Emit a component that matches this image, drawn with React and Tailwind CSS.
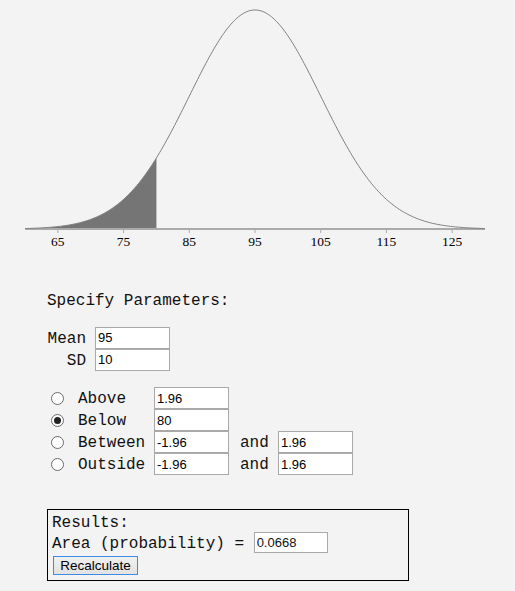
import React from "react";

const MEAN = 95;
const SD = 10;
const LO = 60;
const HI = 130;
const X0 = 25;
const X1 = 485;
const BASE = 229;
const PEAK = 219;

const sx = (v) => X0 + ((v - LO) * (X1 - X0)) / (HI - LO);
const sy = (v) => BASE - PEAK * Math.exp(-0.5 * ((v - MEAN) / SD) ** 2);

const curvePath = () => {
  const pts = [];
  for (let v = LO; v <= HI + 0.001; v += 0.25) {
    pts.push(`${sx(v).toFixed(2)},${sy(v).toFixed(2)}`);
  }
  return "M" + pts.join(" L");
};

const shadePath = (a, b) => {
  const pts = [`${sx(a).toFixed(2)},${BASE + 1}`];
  for (let v = a; v <= b + 0.001; v += 0.25) {
    pts.push(`${sx(v).toFixed(2)},${sy(v).toFixed(2)}`);
  }
  pts.push(`${sx(b).toFixed(2)},${BASE + 1}`);
  return "M" + pts.join(" L") + " Z";
};

const ticks = [65, 75, 85, 95, 105, 115, 125];

const Chart = () => (
  <svg width="515" height="260" className="block">
    <path d={shadePath(LO, 80)} fill="#757575" />
    <line x1={X0} y1={BASE} x2={X1} y2={BASE} stroke="#aaaaaa" strokeWidth="2" />
    {ticks.map((t) => (
      <g key={t}>
        <line x1={sx(t)} y1={BASE} x2={sx(t)} y2={BASE + 4} stroke="#aaaaaa" strokeWidth="1" />
        <text
          x={sx(t)}
          y={BASE + 17}
          textAnchor="middle"
          fontSize="13.5"
          fontFamily="'Liberation Serif', serif"
          fill="#000"
        >
          {t}
        </text>
      </g>
    ))}
    <path d={curvePath()} fill="none" stroke="#808080" strokeWidth="1" />
  </svg>
);

const Field = ({ value }) => (
  <input
    type="text"
    defaultValue={value}
    className="w-[75px] h-[22px] border border-[#a9a9a9] bg-white px-[2px] text-[13px] text-black font-['Liberation_Sans',Arial,sans-serif] outline-none"
  />
);

const Radio = ({ checked }) => (
  <span className="w-[13px] h-[13px] rounded-full border border-[#6b6b6b] bg-white flex items-center justify-center">
    {checked && <span className="w-[7px] h-[7px] rounded-full bg-[#222]" />}
  </span>
);

const options = [
  { label: "Above", a: "1.96" },
  { label: "Below", a: "80", checked: true },
  { label: "Between", a: "-1.96", b: "1.96" },
  { label: "Outside", a: "-1.96", b: "1.96" },
];

export default function App() {
  return (
    <div className="min-h-screen w-[515px] bg-[#f3f3f3] text-[#111] font-['Liberation_Mono','Courier_New',monospace] text-[16px]">
      <Chart />

      <div className="pl-[47px]">
        <div className="mt-[31px] h-[20px] leading-[20px]">Specify Parameters:</div>

        <div className="mt-[16px] flex flex-col">
          <div className="flex items-center h-[22px]">
            <span className="w-[39px] text-right pt-[3px] leading-[19px]">Mean</span>
            <span className="ml-[9px]">
              <Field value="95" />
            </span>
          </div>
          <div className="flex items-center h-[22px]">
            <span className="w-[39px] text-right pt-[3px] leading-[19px]">SD</span>
            <span className="ml-[9px]">
              <Field value="10" />
            </span>
          </div>
        </div>

        <div className="mt-[16px] flex flex-col">
          {options.map((o) => (
            <div key={o.label} className="flex items-center h-[22px]">
              <span className="ml-[4px]">
                <Radio checked={o.checked} />
              </span>
              <span className="ml-[14px] w-[76px] pt-[3px] leading-[19px]">{o.label}</span>
              <Field value={o.a} />
              {o.b && (
                <>
                  <span className="ml-[11px] w-[38px] pt-[3px] leading-[19px]">and</span>
                  <Field value={o.b} />
                </>
              )}
            </div>
          ))}
        </div>

        <div className="mt-[34px] w-[362px] border border-black px-[4px] pt-[2px] pb-[5px]">
          <div className="h-[20px] pt-[3px] leading-[17px]">Results:</div>
          <div className="flex items-center h-[21px]">
            <span className="whitespace-pre pt-[3px] leading-[18px]">Area (probability) = </span>
            <input
              type="text"
              defaultValue="0.0668"
              className="w-[74px] h-[21px] border border-[#a9a9a9] bg-white px-[2px] text-[13px] font-['Liberation_Sans',Arial,sans-serif] outline-none"
            />
          </div>
          <button className="mt-[3px] ml-[1px] block w-[85px] h-[19px] border border-[#3c8ce6] bg-gradient-to-b from-[#f0f0f0] to-[#e2e2e2] text-[13.5px] leading-[17px] text-black font-['Liberation_Sans',Arial,sans-serif]">
            Recalculate
          </button>
        </div>
      </div>
    </div>
  );
}
